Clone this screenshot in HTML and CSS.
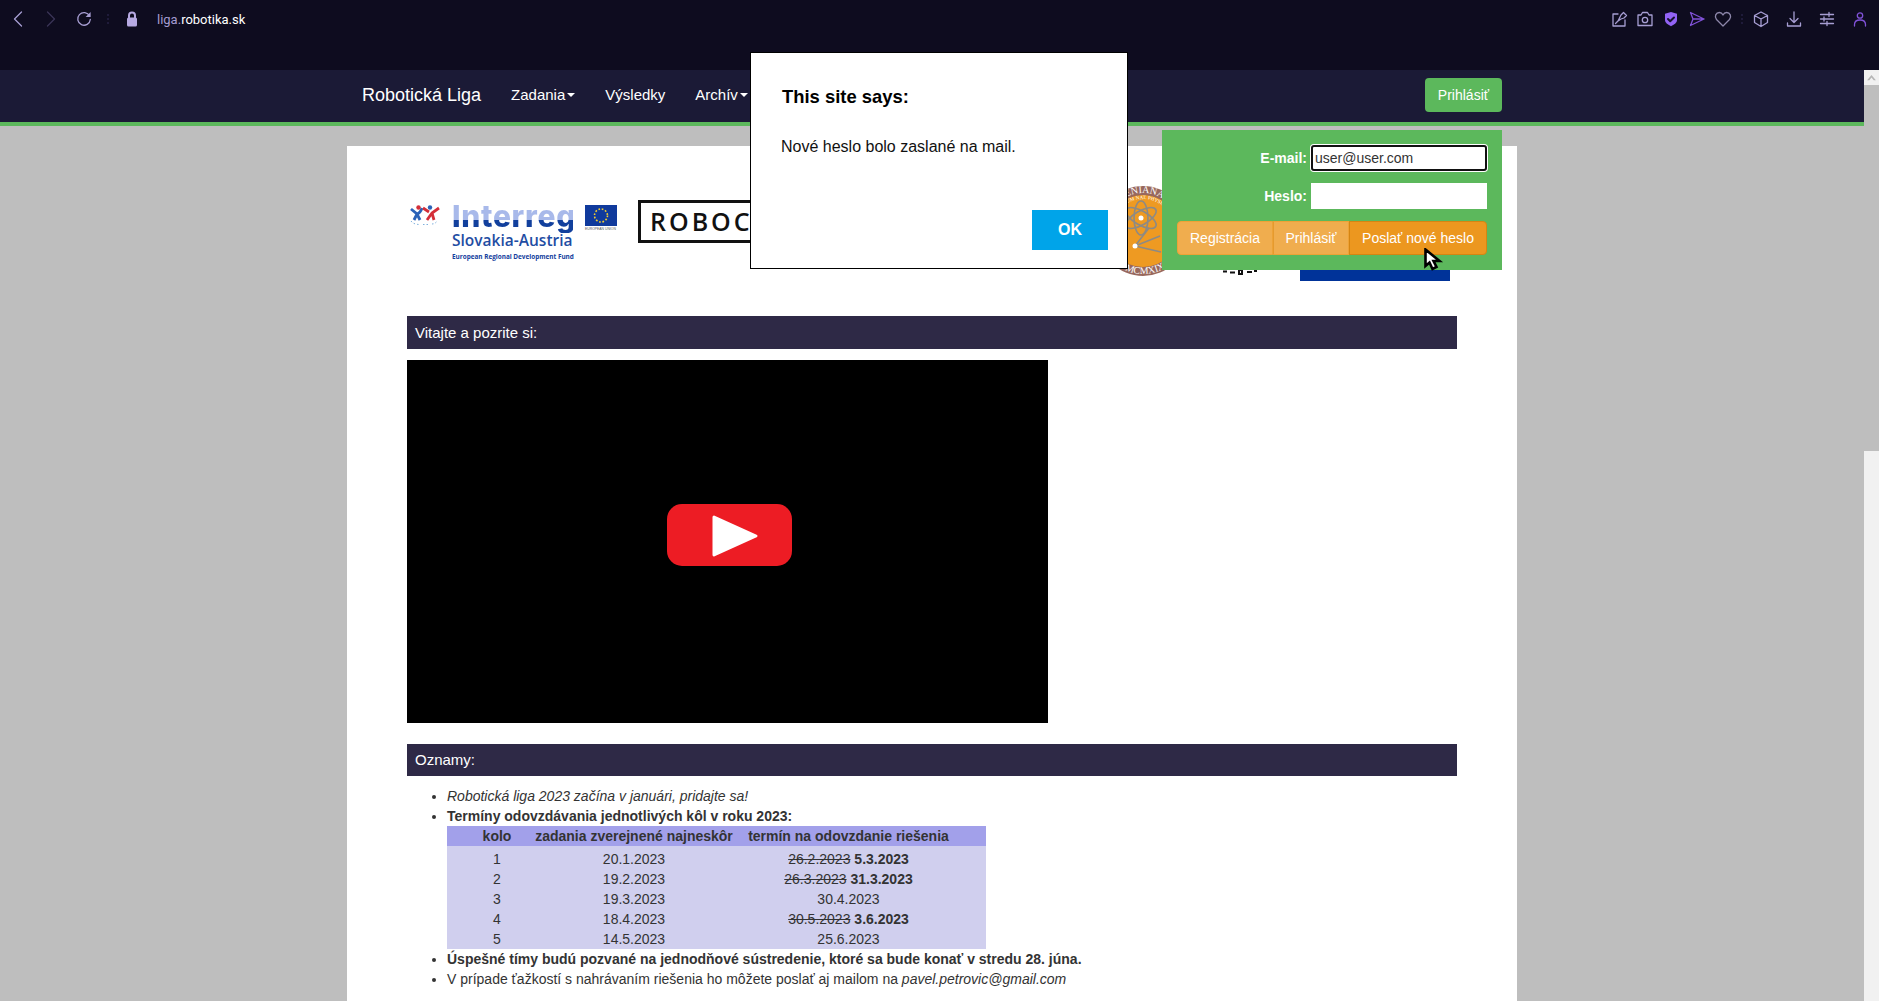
FILE: index.html
```html
<!DOCTYPE html>
<html lang="sk">
<head>
<meta charset="utf-8">
<title>Robotická Liga</title>
<link rel="stylesheet" href="styles.css">
</head>
<body>
<div class="app">
  <header class="toolbar">
    <div class="tools-left">
      <svg class="ti" viewBox="0 0 20 20"><path d="M13.5 3 6.5 10l7 7" class="s-lav"/></svg>
      <svg class="ti ti-next" viewBox="0 0 20 20"><path d="m6.5 3 7 7-7 7" class="s-dim"/></svg>
      <svg class="ti ti-next" viewBox="0 0 20 20"><path d="M15.6 7A6.3 6.3 0 1 0 16.3 10.5" class="s-lav"/><path d="M16.6 3v5h-5z" class="f-lav"/></svg>
      <span class="vdots"></span>
      <svg class="ti ti-lock" viewBox="0 0 20 20"><path d="M7 9V6.5a3 3 0 0 1 6 0V9" class="s-lil"/><rect x="5" y="8.5" width="10" height="9" rx="1.5" class="f-lil"/></svg>
      <span class="url">liga.<b>robotika.sk</b></span>
    </div>
    <div class="tools-right">
      <svg class="ti" viewBox="0 0 20 20"><path d="M9 5H4v12h12v-6" class="s-ico"/><path d="m9 12 3-6 2.500-2.500 3 3L15 9l-3 1zM6.500 14.500 10 11" class="s-ico"/></svg>
      <svg class="ti" viewBox="0 0 20 20"><path d="M3 6h3l1.500-2.500h5L14 6h3v10.500H3z" class="s-ico"/><circle cx="10" cy="11" r="2.700" class="s-ico"/></svg>
      <svg class="ti" viewBox="0 0 20 20"><path d="M10 3 16 4.800v6c0 3.200-3 5-6 6.400-3-1.400-6-3.200-6-6.400v-6z" class="f-vio"/><path d="m7 10 2.200 2.200L13 8.500" class="s-dark"/></svg>
      <svg class="ti" viewBox="0 0 20 20"><path d="M3.500 3.500 17 10 3.500 16.500 6 10zM6 10h11" class="s-vio"/></svg>
      <svg class="ti" viewBox="0 0 20 20"><path d="M10 17 3.500 10.500C1 7.500 3 3.500 6.300 3.500 8 3.500 9.300 4.500 10 6c.7-1.500 2-2.500 3.700-2.500 3.300 0 5.300 4 2.800 7z" class="s-mut"/></svg>
      <span class="vdots vdots-r"></span>
      <svg class="ti" viewBox="0 0 20 20"><path d="m10 3 6.500 3.500v7L10 17.500l-6.500-4v-7zM3.500 6.500 10 10l6.500-3.500M10 10v7.500" class="s-ico"/></svg>
      <svg class="ti ti-wide" viewBox="0 0 20 20"><path d="M10 3v10M6 9.500l4 4 4-4M3.500 14v3h13v-3" class="s-ico"/></svg>
      <svg class="ti ti-wide" viewBox="0 0 20 20"><path d="M3.500 5.500h13M3.500 10h13M3.500 14.500h13M12 3.500v4M7 8v4M10 12.500v4" class="s-ico"/></svg>
      <svg class="ti ti-wide" viewBox="0 0 20 20"><circle cx="10" cy="6.500" r="2.700" class="s-vio"/><path d="M4.500 17v-1.500c0-3 2.500-4.500 5.500-4.500s5.500 1.500 5.500 4.500V17" class="s-vio"/></svg>
    </div>
  </header>

  <div class="viewport">
    <div class="page">
      <nav class="navbar">
        <div class="nav-inner">
          <a class="brand">Robotická Liga</a>
          <a class="nav-item">Zadania<i class="caret"></i></a>
          <a class="nav-item">Výsledky</a>
          <a class="nav-item">Archív<i class="caret"></i></a>
          <a class="nav-btn">Prihlásiť</a>
        </div>
      </nav>

      <main class="panel">
        <div class="logos">
          <div class="interreg">
            <svg class="ir-icon" viewBox="0 0 30 20">
              <path d="M1 4 7 9l3 6M7 9c3-1 4-3 5-6M7 9l-3 6" class="fig-blue"/><circle cx="8.500" cy="2.500" r="2.200" class="dot-red"/>
              <path d="M29 3 22 8l-5 7M22 8l2 7M13 3l6 4" class="fig-red"/><circle cx="20" cy="2.500" r="2.200" class="dot-blue"/>
              <path d="M1 16c2 3 6 3.500 9 3.500M13 19.500h5M22 19c2 0 4-1 5-3" class="fig-drops"/>
            </svg>
            <div class="ir-words">
              <div class="ir-name">Interreg</div>
              <div class="ir-region">Slovakia-Austria</div>
              <div class="ir-fund">European Regional Development Fund</div>
            </div>
            <div class="eu">
              <svg class="eu-flag" viewBox="0 0 32 21"><rect width="32" height="21" class="eu-bg"/><circle cx="16" cy="10.500" r="6.500" class="eu-stars"/></svg>
              <div class="eu-name">EUROPEAN UNION</div>
            </div>
          </div>
          <div class="robocup">ROBOCUP</div>
          <svg class="seal" viewBox="0 0 90 90">
            <circle cx="45" cy="45" r="45" class="seal-ring"/>
            <circle cx="45" cy="45" r="36" class="seal-core"/>
            <path id="sealTop" d="M7 45a38 38 0 0 1 76 0" class="seal-none"/>
            <path id="sealMid" d="M13 45a32 32 0 0 1 64 0" class="seal-none"/>
            <path id="sealBot" d="M2 45a43 43 0 0 0 86 0" class="seal-none"/>
            <text class="seal-txt"><textPath href="#sealTop" startOffset="16%">COMENIANA</textPath></text>
            <text class="seal-mini"><textPath href="#sealMid" startOffset="24%">RERUM NAT. PHYSICORUM</textPath></text>
            <text class="seal-txt"><textPath href="#sealBot" startOffset="36%">MCMXIX</textPath></text>
            <ellipse cx="43" cy="32" rx="7" ry="17" class="seal-orb"/>
            <ellipse cx="43" cy="32" rx="7" ry="17" transform="rotate(60 43 32)" class="seal-orb"/>
            <ellipse cx="43" cy="32" rx="7" ry="17" transform="rotate(-60 43 32)" class="seal-orb"/>
            <path d="M37 60 62 50M37 60l26 6M37 60l14-18" class="seal-orb"/>
            <circle cx="37" cy="60" r="2.500" class="seal-dot"/>
            <circle cx="43" cy="32" r="2.500" class="seal-dot"/>
          </svg>
          <svg class="cropped-logo" viewBox="0 0 36 5"><path d="M1 1.500h4M8 2.500h5M17 0h3v4h-3zM25 2h5M32 1h3" class="crop-ink"/></svg>
          <div class="blue-logo"></div>
        </div>

        <h2 class="bar">Vitajte a pozrite si:</h2>
        <svg class="video" viewBox="0 0 641 363">
          <rect width="641" height="363" class="video-bg"/>
          <rect x="260" y="144" width="125" height="62" rx="15" class="yt-red"/>
          <path d="M307 157 349 176 307 195z" class="yt-play"/>
        </svg>

        <h2 class="bar bar-news">Oznamy:</h2>
        <ul class="news">
          <li><em>Robotická liga 2023 začína v januári, pridajte sa!</em></li>
          <li><strong>Termíny odovzdávania jednotlivých kôl v roku 2023:</strong>
            <table class="terms">
              <colgroup><col class="c1"><col class="c2"><col class="c3"></colgroup>
              <thead><tr><th class="p1">kolo</th><th>zadania zverejnené najneskôr</th><th class="p3">termín na odovzdanie riešenia</th></tr></thead>
              <tbody>
                <tr class="first"><td class="p1">1</td><td>20.1.2023</td><td class="p3"><s>26.2.2023</s> <b>5.3.2023</b></td></tr>
                <tr><td class="p1">2</td><td>19.2.2023</td><td class="p3"><s>26.3.2023</s> <b>31.3.2023</b></td></tr>
                <tr><td class="p1">3</td><td>19.3.2023</td><td class="p3">30.4.2023</td></tr>
                <tr><td class="p1">4</td><td>18.4.2023</td><td class="p3"><s>30.5.2023</s> <b>3.6.2023</b></td></tr>
                <tr><td class="p1">5</td><td>14.5.2023</td><td class="p3">25.6.2023</td></tr>
              </tbody>
            </table>
          </li>
          <li><strong>Úspešné tímy budú pozvané na jednodňové sústredenie, ktoré sa bude konať v stredu 28. júna.</strong></li>
          <li>V prípade ťažkostí s nahrávaním riešenia ho môžete poslať aj mailom na <em>pavel.petrovic@gmail.com</em></li>
        </ul>
      </main>
    </div>
    <div class="scrollbar">
      <div class="sb-btn"><svg class="sb-arrow" viewBox="0 0 10 8"><path d="M0 7 5 1l5 6H7.500L5 4 2.500 7z" class="sb-ink"/></svg></div>
      <div class="sb-track"></div>
      <div class="sb-thumb"></div>
    </div>
  </div>

  <form class="login">
    <div class="login-row"><label class="login-label">E-mail:</label><input class="login-input is-focus" value="user@user.com"></div>
    <div class="login-row"><label class="login-label">Heslo:</label><input class="login-input" type="password"></div>
    <div class="btn-group">
      <span class="bg-btn b-reg">Registrácia</span>
      <span class="bg-btn b-log">Prihlásiť</span>
      <span class="bg-btn b-new">Poslať nové heslo</span>
    </div>
  </form>

  <svg class="cursor" viewBox="0 0 20 23"><path d="M1.500 1.500V18l4-3.500 3 6.500 4-2-3-6h6z" class="cursor-ink"/></svg>

  <div class="dialog" role="alertdialog">
    <div class="dlg-title">This site says:</div>
    <div class="dlg-msg">Nové heslo bolo zaslané na mail.</div>
    <div class="dlg-actions"><button class="dlg-ok">OK</button></div>
  </div>
</div>
</body>
</html>
```
FILE: styles.css
```css
* { box-sizing: border-box; }
html, body { margin: 0; height: 100%; overflow: hidden; }
body { font: 14px/20px "Liberation Sans", Arial, sans-serif; color: #333; background: #0e0c1f; }
.app { position: relative; width: 1879px; height: 1001px; display: flex; flex-direction: column; overflow: hidden; }

/* browser toolbar */
.toolbar { height: 70px; flex: none; background: #0e0c1f; display: flex; justify-content: space-between; padding: 9px 9px 0 8px; }
.tools-left, .tools-right { display: flex; align-items: flex-start; height: 20px; }
.ti { width: 20px; height: 20px; flex: none; fill: none; display: block; }
.ti-next { margin-left: 13px; }
.ti-lock { margin-left: 13px; }
.tools-right { gap: 6px; }
.ti-wide { margin-left: 7px; }
.s-lav, .s-dim, .s-ico, .s-vio, .s-mut, .s-lil, .s-dark { fill: none; stroke-width: 1.3; stroke-linejoin: round; stroke-linecap: round; }
.s-lav { stroke: #a79ed3; }
.s-dim { stroke: #3a3556; }
.s-ico { stroke: #a79ed3; }
.s-vio { stroke: #8052d8; }
.s-mut { stroke: #8d87aa; }
.s-lil { stroke: #b6a9e2; stroke-width: 2; }
.s-dark { stroke: #17122e; stroke-width: 2; }
.f-lav { fill: #a79ed3; }
.f-lil { fill: #b6a9e2; }
.f-vio { fill: #9263f4; }
.vdots { width: 2px; height: 10px; margin: 5px 0 0 13px; background: repeating-linear-gradient(#1f1b3a 0 2px, transparent 2px 4px); }
.vdots-r { margin: 5px 2px 0 2px; }
.url { margin-left: 15px; padding-top: 1px; font: 13px/20px Roboto, "Liberation Sans", sans-serif; color: #a49bd0; }
.url b { font-weight: 400; color: #fff; }

/* page */
.viewport { flex: 1; display: flex; min-height: 0; }
.page { flex: 1; min-width: 0; background: #bebebe; overflow: hidden; }
.navbar { height: 56px; background: #1b1a36; border-bottom: 4px solid #5cb85c; }
.nav-inner { width: 1170px; height: 50px; margin: 0 auto; padding: 0 15px; display: flex; align-items: center; color: #fff; }
.brand { font-size: 18px; margin-right: 15px; }
.nav-item { font-size: 15px; padding: 0 15px; display: flex; align-items: center; }
.caret { width: 0; height: 0; margin-left: 2px; border-top: 4px solid #fff; border-left: 4px solid transparent; border-right: 4px solid transparent; }
.nav-btn { margin-left: auto; height: 34px; padding: 0 13px; line-height: 34px; background: #5cb85c; border-radius: 4px; }

.panel { width: 1170px; margin: 20px auto 0; background: #fff; padding: 0 60px; height: 900px; }
.logos { height: 170px; display: flex; align-items: flex-start; }
.interreg { margin: 59px 0 0 3px; width: 211px; display: flex; }
.ir-icon { width: 30px; height: 20px; fill: none; flex: none; }
.fig-blue { stroke: #2a62b8; stroke-width: 2.800; fill: none; }
.fig-red { stroke: #d42e38; stroke-width: 2.800; fill: none; }
.fig-drops { stroke: #7fb0dc; stroke-width: 1; stroke-dasharray: 1.500 2; fill: none; }
.dot-red { fill: #d42e38; }
.dot-blue { fill: #2a62b8; }
.ir-words { margin-left: 12px; width: 121px; flex: none; color: #12409d; font-family: "Open Sans", sans-serif; white-space: nowrap; }
.ir-name { height: 34px; margin-top: -6px; font: 800 30px/34px Inter, sans-serif; letter-spacing: .7px; background: linear-gradient(#a8b9ea 0 21px, #12409d 21px); -webkit-background-clip: text; background-clip: text; color: transparent; }
.ir-region { font-size: 15.500px; line-height: 15px; font-weight: 600; color: #1f4da3; }
.ir-fund { font-size: 6.400px; line-height: 9px; margin-top: 4px; font-weight: 700; }
.eu { margin-left: 12px; width: 32px; flex: none; }
.eu-flag { width: 32px; height: 21px; display: block; }
.eu-bg { fill: #103a9c; }
.eu-stars { fill: none; stroke: #f4cf2e; stroke-width: 1.600; stroke-dasharray: 1.700 1.700; }
.eu-name { font-size: 3.400px; line-height: 6px; color: #555; white-space: nowrap; }
.robocup { margin: 54px 0 0 17px; width: 210px; height: 43px; flex: none; border: 3px solid #111; font: 600 25px/37px "Open Sans", sans-serif; letter-spacing: 3px; color: #111; padding-left: 9px; }
.seal { width: 90px; height: 90px; margin: 40px 0 0 250px; flex: none; }
.seal-ring { fill: #98685d; }
.seal-core { fill: #ee9a22; }
.seal-none { fill: none; }
.seal-txt { font: 10px "Liberation Serif", serif; fill: #fff; }
.seal-mini { font: 5px "Liberation Serif", serif; fill: #fff; }
.seal-orb { fill: none; stroke: #8d8a85; stroke-width: 1.600; }
.seal-dot { fill: #fff; }
.cropped-logo { width: 36px; height: 5px; margin: 124px 0 0 34px; flex: none; }
.crop-ink { stroke: #111; stroke-width: 2; fill: none; }
.blue-logo { width: 150px; height: 60px; margin: 75px 0 0 42px; flex: none; background: #003399; }

.bar { margin: 0; height: 33px; padding: 0 8px; background: #2e2946; color: #fff; font-size: 15px; font-weight: 400; line-height: 33px; }
.video { display: block; width: 641px; height: 363px; margin-top: 11px; }
.video-bg { fill: #000; }
.yt-red { fill: #ed1c24; }
.yt-play { fill: #fff; stroke: #fff; stroke-width: 3; stroke-linejoin: round; }
.bar-news { margin-top: 21px; height: 32px; line-height: 32px; }
.news { margin: 10px 0 0; padding-left: 40px; }
.terms { border-collapse: collapse; table-layout: fixed; width: 539px; text-align: center; }
.c1 { width: 80px; }
.c2 { width: 214px; }
.c3 { width: 245px; }
.terms th, .terms td { padding: 0; height: 20px; font-weight: 400; }
.terms th { font-weight: 700; background: #a2a0ea; }
.terms td { background: #d0cfee; }
.terms b { font-weight: 700; }
.terms .p1 { padding-left: 20px; }
.terms .p3 { padding-right: 30px; }
.first td { height: 23px; padding-top: 3px; }

/* scrollbar */
.scrollbar { width: 15px; flex: none; display: flex; flex-direction: column; background: #bebebe; }
.sb-btn { height: 15px; background: #f1f1f1; display: flex; align-items: center; justify-content: center; }
.sb-arrow { width: 9px; height: 7px; }
.sb-ink { fill: #b5b5b5; }
.sb-track { height: 366px; }
.sb-thumb { flex: 1; background: #f1f1f1; }

/* login dropdown */
.login { position: absolute; left: 1162px; top: 130px; width: 340px; height: 140px; padding: 15px; background: #5cb85c; display: flex; flex-direction: column; gap: 12px; }
.login-row { display: flex; justify-content: flex-end; align-items: center; gap: 4px; }
.login-label { color: #fff; font-weight: 700; }
.login-input { width: 176px; height: 26px; padding: 0 3px; border: 0; background: #fff; font: 14px "Liberation Sans", sans-serif; color: #333; outline: none; }
.is-focus { border-radius: 3px; padding: 0 2px; border: 2px solid #111; box-shadow: 0 0 0 1px #fff; }
.btn-group { display: flex; height: 34px; color: #fff; }
.bg-btn { display: block; height: 34px; line-height: 32px; text-align: center; border: 1px solid #eea236; }
.b-reg { width: 96px; background: #f0ad4e; border-radius: 4px 0 0 4px; }
.b-log { width: 76px; background: #f0ad4e; border-left-color: #e59a2e; }
.b-new { width: 138px; background: #ec971f; border-color: #d58512; border-radius: 0 4px 4px 0; }
.cursor { position: absolute; left: 1424px; top: 248px; width: 20px; height: 23px; }
.cursor-ink { fill: #fff; stroke: #000; stroke-width: 2.600; stroke-linejoin: miter; }

/* alert dialog */
.dialog { position: absolute; left: 750px; top: 52px; width: 378px; height: 217px; background: #fff; border: 1px solid #000; padding: 0 15px 0 30px; color: #111; display: flex; flex-direction: column; }
.dlg-title { font-size: 18.400px; font-weight: 700; line-height: 22px; margin-top: 33px; margin-left: 1px; color: #000; }
.dlg-msg { font-size: 16px; line-height: 20px; margin-top: 29px; }
.dlg-actions { margin-top: auto; margin-bottom: 18px; display: flex; justify-content: flex-end; margin-right: 4px; }
.dlg-ok { width: 76px; height: 40px; border: 0; background: #00a4e9; color: #fff; font: 700 16px "Liberation Sans", sans-serif; }
```
